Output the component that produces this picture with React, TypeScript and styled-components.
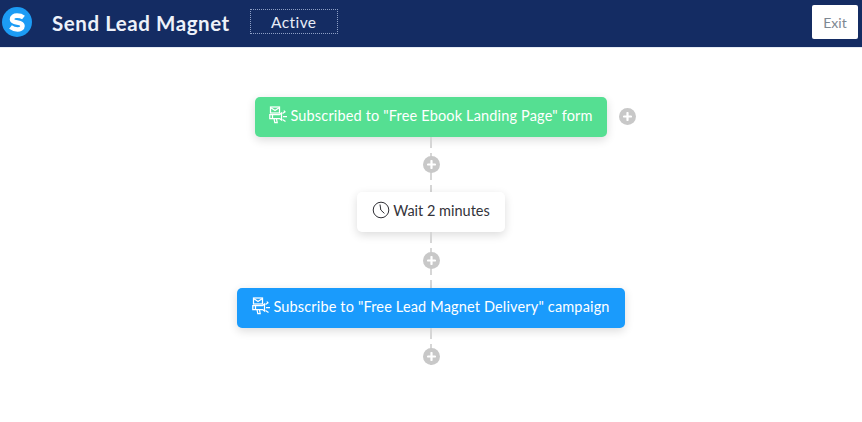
import React from "react";
import styled, { createGlobalStyle } from "styled-components";

const Global = createGlobalStyle`
  html, body { margin: 0; padding: 0; background: #fff; }
  body { font-family: Lato, "Liberation Sans", sans-serif; }
`;

const Page = styled.div`
  width: 862px;
  height: 422px;
  overflow: hidden;
  background: #fff;
`;

const Header = styled.header`
  height: 48px;
  box-sizing: border-box;
  background: #142c63;
  border-bottom: 1px solid #e6ebf4;
  display: flex;
  align-items: center;
  padding: 0 4px 0 2px;
`;

const Logo = styled.svg`
  width: 30px;
  height: 30px;
  flex: none;
  margin-bottom: 3px;
`;

const Title = styled.h1`
  margin: 0 0 2px 20px;
  font-size: 20.5px;
  font-weight: 700;
  letter-spacing: 0.56px;
  color: #eef2fa;
  white-space: nowrap;
`;

const Status = styled.div`
  margin: 0 0 4px 20px;
  width: 88px;
  height: 25px;
  box-sizing: border-box;
  border: 1px dotted #8ea0c6;
  display: flex;
  align-items: center;
  justify-content: center;
  font-size: 15.5px;
  letter-spacing: 0.4px;
  color: #e8edf7;
`;

const ExitButton = styled.button`
  margin: 0 0 3px auto;
  width: 46px;
  height: 34px;
  border: 0;
  border-radius: 2px;
  background: #fff;
  color: #7d8792;
  font-family: Lato, sans-serif;
  font-size: 14px;
  padding: 0;
`;

const Flow = styled.main`
  display: flex;
  flex-direction: column;
  align-items: center;
  padding-top: 49px;
`;

const Node = styled.div<{ $bg: string; $fg: string; $w: number; $spacing: number }>`
  position: relative;
  width: ${(p) => p.$w}px;
  height: 40px;
  box-sizing: border-box;
  padding-bottom: 4px;
  border-radius: 5px;
  background: ${(p) => p.$bg};
  color: ${(p) => p.$fg};
  box-shadow: 0 3px 10px rgba(0, 0, 0, 0.14);
  display: flex;
  align-items: center;
  justify-content: center;
  gap: 3px;
  font-size: 14.5px;
  letter-spacing: ${(p) => p.$spacing}px;
  white-space: nowrap;
`;

const Connector = styled.div<{ $h: number }>`
  position: relative;
  width: 2px;
  height: ${(p) => p.$h}px;
  background: repeating-linear-gradient(to bottom, #d6d6d6 0 11px, transparent 11px 16px);
  display: flex;
  align-items: center;
  justify-content: center;
`;

const Plus = styled.span`
  flex: none;
  width: 17px;
  height: 17px;
  border-radius: 50%;
  background: #c8c8c8;
  display: flex;
  align-items: center;
  justify-content: center;
`;

const SidePlus = styled(Plus)`
  position: absolute;
  left: 364px;
  top: 11px;
`;

const PlusGlyph = styled.svg`
  width: 9px;
  height: 9px;
`;

const TailConnector = styled(Connector)`
  align-items: flex-end;
`;

const NodeIcon = styled.svg`
  width: 18px;
  height: 18px;
  flex: none;
`;

const ClockIcon = styled.svg`
  width: 18px;
  height: 18px;
  flex: none;
`;

const PlusMark = () => (
  <PlusGlyph viewBox="0 0 9 9">
    <path d="M4.5 1v7M1 4.5h7" stroke="#fff" strokeWidth="2.2" strokeLinecap="round" />
  </PlusGlyph>
);

const MegaphoneMail = () => (
  <NodeIcon viewBox="0 0 18 18" fill="none" stroke="currentColor" strokeWidth="1.25">
    <rect x="1.500" y="1" width="9" height="6" />
    <path d="M1.500 1.500 6 4.500l4.500-3" />
    <path d="M.8 8.500h9.700l2-1.500v7l-2-1.500H.8z" />
    <path d="M3.500 8.500v4M5 12.500l.8 4h2.400l-.8-4" />
    <path d="M14 10.500h4M13.500 7.500l3-2M13.500 13.500l3 2M15 4.500l.5 1" />
  </NodeIcon>
);

const Clock = () => (
  <ClockIcon viewBox="0 0 18 18" fill="none" stroke="#2f2f35" strokeWidth="1">
    <circle cx="9" cy="9" r="7.800" />
    <path d="M8 3.500 8.800 9l3.600 3.400" />
  </ClockIcon>
);

export default function App() {
  return (
    <Page>
      <Global />
      <Header>
        <Logo viewBox="0 0 30 30">
          <circle cx="15" cy="15" r="15" fill="#1c9cf5" />
          <path
            d="M21.500 10.500C19.500 9 17.500 8.600 15 8.600 12 8.600 10 10 10 12.200 10 17 20.500 14 20.500 19 20.500 21.200 18 22.500 15.500 22.500 13 22.500 10.500 21.500 8.500 20"
            fill="none"
            stroke="#fff"
            strokeWidth="4.600"
          />
        </Logo>
        <Title>Send Lead Magnet</Title>
        <Status>Active</Status>
        <ExitButton>Exit</ExitButton>
      </Header>
      <Flow>
        <Node $bg="#55df92" $fg="#fff" $w={352} $spacing={0.16}>
          <MegaphoneMail />
          Subscribed to "Free Ebook Landing Page" form
          <SidePlus>
            <PlusMark />
          </SidePlus>
        </Node>
        <Connector $h={55}>
          <Plus>
            <PlusMark />
          </Plus>
        </Connector>
        <Node $bg="#fff" $fg="#33333a" $w={148} $spacing={0}>
          <Clock />
          Wait 2 minutes
        </Node>
        <Connector $h={56}>
          <Plus>
            <PlusMark />
          </Plus>
        </Connector>
        <Node $bg="#1a9bfc" $fg="#fff" $w={388} $spacing={0.16}>
          <MegaphoneMail />
          Subscribe to "Free Lead Magnet Delivery" campaign
        </Node>
        <TailConnector $h={37}>
          <Plus>
            <PlusMark />
          </Plus>
        </TailConnector>
      </Flow>
    </Page>
  );
}
